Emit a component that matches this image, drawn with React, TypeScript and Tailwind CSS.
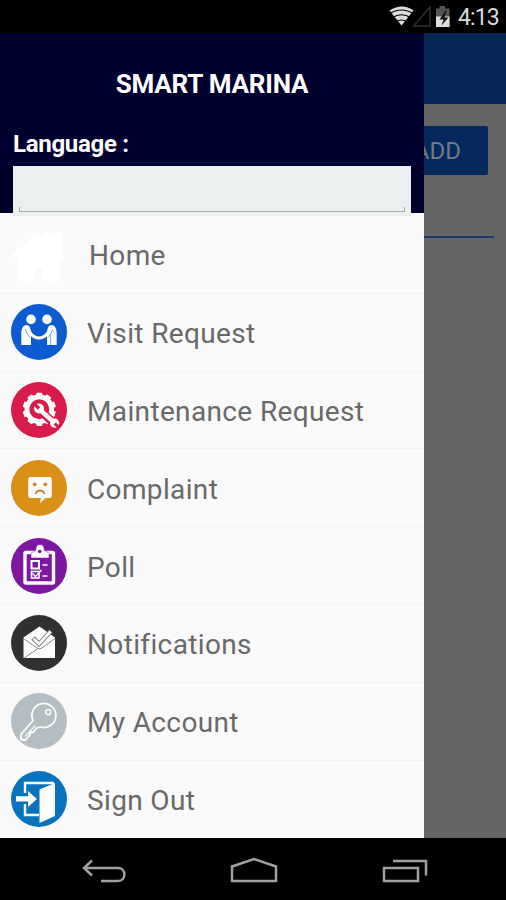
import type { ReactNode } from "react";

const W = "#fdfdfd";

function Gear() {
  const teeth = Array.from({ length: 10 }, (_, i) => i * 36);
  return (
    <g>
      <circle cx="28.3" cy="27.3" r="12.4" fill="none" stroke={W} strokeWidth="4.800" />
      {teeth.map((a) => (
        <rect key={a} x="25.3" y="10.7" width="6" height="5" rx="1" fill={W} transform={`rotate(${a} 28.3 27.3)`} />
      ))}
      <path d="M29 28 44 42.500" stroke="#d81b4a" strokeWidth="8.500" />
      <path d="M28 27 45 42" stroke={W} strokeWidth="4.400" />
      <circle cx="28" cy="26.500" r="5" fill={W} />
      <path d="M22.500 21 28 26.500" stroke="#d81b4a" strokeWidth="3.200" />
      <circle cx="43.700" cy="41.200" r="4.600" fill={W} />
      <path d="M43.800 41.500 47.500 45.200" stroke="#d81b4a" strokeWidth="3" />
    </g>
  );
}

function Badge({ color, children }: { color: string; children: ReactNode }) {
  return (
    <svg className="block h-14 w-14" viewBox="0 0 56 56" fill="none">
      <circle cx="28" cy="28" r="28" fill={color} />
      {children}
    </svg>
  );
}

const items: { label: string; icon: ReactNode; pad: string }[] = [
  {
    label: "Home",
    pad: "pl-[22px]",
    icon: (
      <svg className="block h-14 w-14" viewBox="0 0 56 56">
        <path d="M1 29 24 8l8 5V7h19v19l3 4-3 3-2-1v23H32V41h-8v14H7V31l-4 2z" fill="#fff" />
      </svg>
    ),
  },
  {
    label: "Visit Request",
    pad: "pl-[20px]",
    icon: (
      <Badge color="#0d5bd1">
        <circle cx="20" cy="15.400" r="4.800" fill={W} />
        <circle cx="36" cy="15.400" r="4.800" fill={W} />
        <path d="M10.300 41V29.500c0-5 2-8.500 5-8.500 3.500 0 4 3 4.700 7v13z" fill={W} />
        <path d="M45.700 41V29.500c0-5-2-8.500-5-8.500-3.500 0-4 3-4.700 7v13z" fill={W} />
        <path d="M16 23.500 20 30q3.500 4 8 4t8-4l4-6.500" stroke={W} strokeWidth="3" strokeLinecap="round" />
        <path d="M14 25q2 6 5 8.500M42 25q-2 6-5 8.500" stroke="#6b9ae3" strokeWidth=".9" />
        <path d="M39.500 30v11" stroke="#6b9ae3" strokeWidth=".8" />
      </Badge>
    ),
  },
  { label: "Maintenance Request", pad: "pl-[20px]", icon: <Badge color="#d81b4a"><Gear /></Badge> },
  {
    label: "Complaint",
    pad: "pl-[20px]",
    icon: (
      <Badge color="#d99015">
        <path d="M19.500 17h19a2.300 2.300 0 0 1 2.300 2.300v16.400a2.300 2.300 0 0 1-2.300 2.300h-4L29 43l1-5H19.500a2.300 2.300 0 0 1-2.300-2.300V19.300a2.300 2.300 0 0 1 2.300-2.300z" fill={W} />
        <circle cx="23.700" cy="24.300" r="1.900" fill="#d08520" />
        <circle cx="34.300" cy="24.300" r="1.900" fill="#d08520" />
        <path d="M24.500 34q1.200-3.500 4.500-3.500t4.500 3.500" stroke="#c68a43" strokeWidth="1.800" />
      </Badge>
    ),
  },
  {
    label: "Poll",
    pad: "pl-[20px]",
    icon: (
      <Badge color="#7d17a0">
        <rect x="14" y="14.500" width="28.500" height="30.500" rx="1" stroke={W} strokeWidth="3.400" />
        <path d="M20 20v-4q0-2 3-2.500 2-.5 2-3a4 4 0 0 1 8 0q0 2.500 2 3 3 .5 3 2.500v4z" fill={W} stroke="#7d17a0" strokeWidth=".5" />
        <circle cx="28.700" cy="13.500" r="1.800" fill="#7d17a0" />
        <rect x="20.500" y="23" width="7.500" height="7.500" stroke={W} strokeWidth="2" />
        <rect x="20.500" y="33.500" width="7.500" height="6.500" stroke={W} strokeWidth="1.600" />
        <path d="m21.500 35.500 3 3 6-6.500" stroke={W} strokeWidth="1.500" />
        <path d="M31.500 27h5M31.500 38h5" stroke={W} strokeWidth="1.400" />
      </Badge>
    ),
  },
  {
    label: "Notifications",
    pad: "pl-[20px]",
    icon: (
      <Badge color="#303030">
        <path d="M12.500 22.500 28.500 11.500 44 22.500V43H12.500z" fill={W} />
        <path d="M12.500 23.500 26 33q2.500 1.500 5 0l13-9.500M13 43l14-9.500" stroke="#888" strokeWidth="1" />
        <path d="m22 23 6 6 12-13" stroke="#777" strokeWidth="4.600" />
        <path d="m22.500 23.500 5.500 5.500 11.500-12.500" stroke={W} strokeWidth="2.800" />
      </Badge>
    ),
  },
  {
    label: "My Account",
    pad: "pl-[20px]",
    icon: (
      <Badge color="#b4bdc2">
        <path d="M22 27.500A12 12 0 1 1 29.500 34l-4 1-3 4-3 .5-1 3-4 4.500-4.500-.5v-5z" stroke={W} strokeWidth="1.800" strokeLinejoin="round" />
        <circle cx="37.200" cy="19" r="2.600" stroke={W} strokeWidth="1.500" />
        <path d="m14 43.500 10.500-11" stroke={W} strokeWidth="1.200" />
      </Badge>
    ),
  },
  {
    label: "Sign Out",
    pad: "pl-[20px]",
    icon: (
      <Badge color="#0872bc">
        <path d="M14 22V12h29M14 33v11h14" stroke={W} strokeWidth="2.400" />
        <path d="M28.500 18.500 44 12v33l-15.500 7z" fill={W} />
        <path d="M5 25.300h12V20l9 8-9 8v-5.500H5z" fill={W} />
      </Badge>
    ),
  },
];

function StatusBar() {
  return (
    <header className="flex h-[33px] shrink-0 items-start justify-end bg-black pr-[7px]">
      <svg className="mt-[6px] h-[22px] w-[64px]" viewBox="0 0 64 22" fill="none">
        <path d="M2.500 4.500Q15 -3.500 26.500 4.500L14.500 19.500z" fill="#dedede" />
        <path d="M2 8q12.500-8 25 0M5 12q9.500-6.500 19 0M9 16q5.500-4 11 0" stroke="#000" strokeWidth="1.200" />
        <path d="M43 1v19H26.500z" stroke="#333" strokeWidth="1.300" />
        <path d="M49 2.500h3.500V0H58v2.500h4.500v18.500H49z" fill="#555" />
        <path d="M49 10.500h13.500V21H49z" fill="#dedede" />
        <path d="m58.500 4.500-6 9h4l-2 6 7-8h-4l2-7z" fill="#151515" />
      </svg>
      <span className="ml-[7px] mt-[5px] w-[41px] whitespace-nowrap text-[23px] leading-[25px] tracking-[-0.9px] text-[#dcdcdc]">4:13</span>
    </header>
  );
}

function Drawer() {
  return (
    <aside className="flex w-[424px] shrink-0 flex-col bg-[#fafafa]">
      <div className="flex h-[180px] shrink-0 flex-col bg-[#00002e]">
        <h1 className="mt-[35px] text-center text-[26px] font-bold leading-[32px] tracking-[-0.2px] text-white">SMART MARINA</h1>
        <div className="mt-[30px] pl-[13px] text-[24px] font-bold leading-[28px] tracking-[-0.3px] text-white">Language :</div>
        <div className="mx-[13px] mt-[8px] flex h-[50px] shrink-0 flex-col justify-end bg-[#ebeff0] px-[6px] pb-[4px]">
          <div className="h-[5px] border-x border-b border-[#a4a8a9]" />
        </div>
      </div>
      <nav className="flex flex-col pt-[3px]">
        {items.map((item) => (
          <div key={item.label} className="flex h-[77.8px] items-center border-b border-[#f1f1f1] pl-[11px] last:border-transparent">
            {item.icon}
            <span className={`${item.pad} whitespace-nowrap pt-[4px] text-[28px] leading-[34px] tracking-[0.36px] text-[#696969]`}>{item.label}</span>
          </div>
        ))}
      </nav>
    </aside>
  );
}

function DimmedPage() {
  return (
    <main className="flex flex-1 flex-col bg-[#646464]">
      <div className="h-[71px] bg-[#042756]" />
      <div className="mt-[22px] flex h-[49px] w-[64px] items-center justify-end overflow-hidden rounded-r-[2px] bg-[#03295d] pr-[27px] pt-px text-[24px] text-[#747b84]">ADD</div>
      <div className="mt-[61px] h-[2px] w-[70px] bg-[#193c70]" />
    </main>
  );
}

function NavBar() {
  return (
    <footer className="flex h-[62px] shrink-0 items-start bg-black">
      <svg className="block h-[62px] w-[506px]" viewBox="0 0 506 62" fill="none" stroke="#a0a0a0" strokeWidth="2.500">
        <path d="m92 22.500-8 7.500 8 7.500M84 30h34c8.500 0 8.500 13 0 13h-17" />
        <path d="M232 43V28.500l22-7.500 22 7.500V43z" />
        <path d="M384 30h34v13h-34zM393 23h33v14.500" />
      </svg>
    </footer>
  );
}

export default function App() {
  return (
    <div className="flex h-[900px] w-[506px] flex-col overflow-hidden bg-black font-['Roboto',sans-serif]">
      <StatusBar />
      <div className="flex h-[805px] shrink-0 overflow-hidden">
        <Drawer />
        <DimmedPage />
      </div>
      <NavBar />
    </div>
  );
}
